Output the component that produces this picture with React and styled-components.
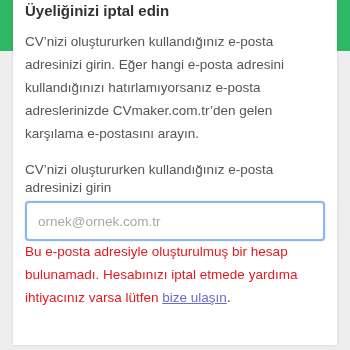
import styled, { createGlobalStyle } from 'styled-components'

const GlobalStyle = createGlobalStyle`
  html, body {
    margin: 0;
    padding: 0;
    background: #eeeeee;
    font-family: 'Liberation Sans', Arial, sans-serif;
  }
`

const Page = styled.div`
  width: 350px;
  height: 350px;
  overflow: hidden;
  background: #eeeeee;
`

const Header = styled.div`
  height: 51px;
  background: #2fb866;
`

const Modal = styled.div`
  position: fixed;
  top: 0;
  left: 13px;
  width: 324px;
  height: 345px;
  box-sizing: border-box;
  padding: 0 12px;
  background: #ffffff;
  box-shadow: 0 0 3px rgba(0, 0, 0, 0.12);
`

const Title = styled.h2`
  margin: 0;
  padding-top: 1px;
  font-size: 15px;
  line-height: 20px;
  font-weight: 700;
  color: #333333;
`

const Text = styled.p`
  margin: 9px 0 0;
  font-size: 13.5px;
  line-height: 23px;
  color: #555555;
`

const Label = styled.label`
  display: block;
  margin-top: 16px;
  font-size: 13.5px;
  line-height: 18px;
  color: #555555;
`

const Input = styled.input`
  display: block;
  width: 100%;
  height: 40px;
  box-sizing: border-box;
  margin-top: 4px;
  padding: 0 11px;
  border: 2px solid #8ab8ee;
  border-radius: 4px;
  outline: none;
  font-family: inherit;
  font-size: 13.5px;
  color: #333333;
  box-shadow: 0 0 2px rgba(80, 150, 230, 0.4);

  &::placeholder {
    color: #a8a8a8;
  }
`

const Error = styled.p`
  margin: -1px 0 0;
  font-size: 13.5px;
  line-height: 23px;
  color: #e3191f;
`

const Link = styled.a`
  color: #6a6acf;
  text-decoration: underline;
`

const Dot = styled.span`
  color: #444444;
`

const App = () => {
  return (
    <Page>
      <GlobalStyle />
      <Header />
      <Modal>
        <Title>Üyeliğinizi iptal edin</Title>
        <Text>
          CV’nizi oluştururken kullandığınız e-posta adresinizi girin. Eğer hangi e-posta adresini
          kullandığınızı hatırlamıyorsanız e-posta adreslerinizde CVmaker.com.tr’den gelen
          karşılama e-postasını arayın.
        </Text>
        <Label htmlFor="email">CV’nizi oluştururken kullandığınız e-posta adresinizi girin</Label>
        <Input id="email" type="email" placeholder="ornek@ornek.com.tr" />
        <Error>
          Bu e-posta adresiyle oluşturulmuş bir hesap bulunamadı. Hesabınızı iptal etmede yardıma
          ihtiyacınız varsa lütfen <Link href="#">bize ulaşın</Link>
          <Dot>.</Dot>
        </Error>
      </Modal>
    </Page>
  )
}

export default App
